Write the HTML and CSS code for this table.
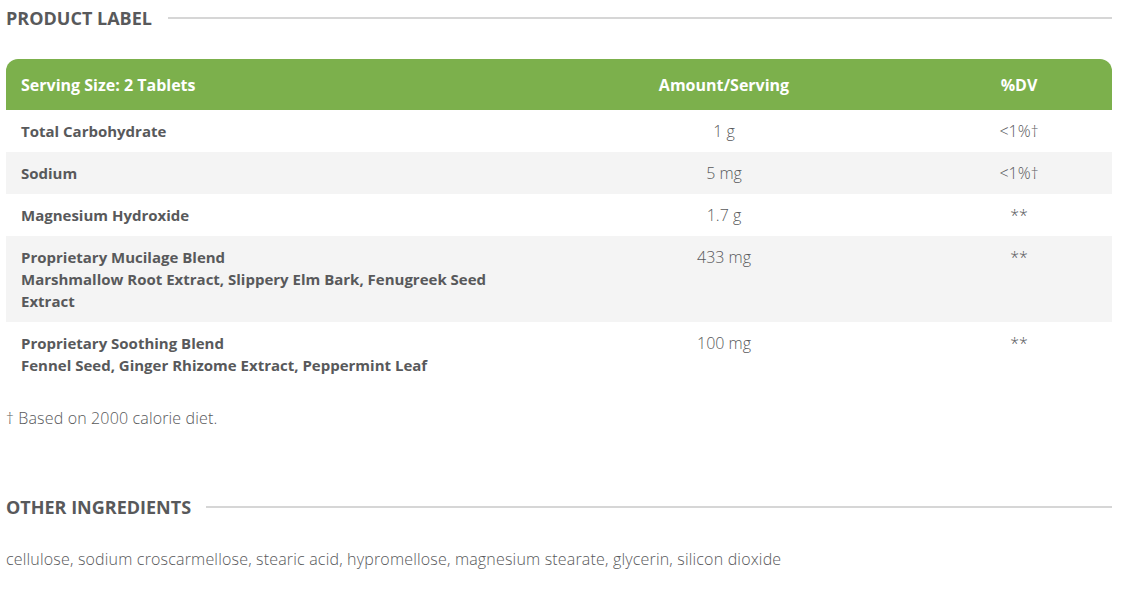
FILE: index.html
```html
<!DOCTYPE html>
<html>
<head>
<meta charset="utf-8">
<link rel="stylesheet" href="styles.css">
</head>
<body>
<section class="section">
  <h2 class="heading"><span class="heading-text">PRODUCT LABEL</span><span class="heading-line"></span></h2>
  <div class="facts">
    <div class="row head">
      <div class="cell name">Serving Size: 2 Tablets</div>
      <div class="cell amt">Amount/Serving</div>
      <div class="cell dv">%DV</div>
    </div>
    <div class="row">
      <div class="cell name">Total Carbohydrate</div>
      <div class="cell amt">1 g</div>
      <div class="cell dv">&lt;1%†</div>
    </div>
    <div class="row alt">
      <div class="cell name">Sodium</div>
      <div class="cell amt">5 mg</div>
      <div class="cell dv">&lt;1%†</div>
    </div>
    <div class="row">
      <div class="cell name">Magnesium Hydroxide</div>
      <div class="cell amt">1.7 g</div>
      <div class="cell dv">**</div>
    </div>
    <div class="row alt">
      <div class="cell name">Proprietary Mucilage Blend<br>Marshmallow Root Extract, Slippery Elm Bark, Fenugreek Seed Extract</div>
      <div class="cell amt">433 mg</div>
      <div class="cell dv">**</div>
    </div>
    <div class="row">
      <div class="cell name">Proprietary Soothing Blend<br>Fennel Seed, Ginger Rhizome Extract, Peppermint Leaf</div>
      <div class="cell amt">100 mg</div>
      <div class="cell dv">**</div>
    </div>
  </div>
  <p class="note">† Based on 2000 calorie diet.</p>
</section>
<section class="section other">
  <h2 class="heading narrow"><span class="heading-text">OTHER INGREDIENTS</span><span class="heading-line"></span></h2>
  <p class="ingredients">cellulose, sodium croscarmellose, stearic acid, hypromellose, magnesium stearate, glycerin, silicon dioxide</p>
</section>
</body>
</html>
```
FILE: styles.css
```css
html, body {
  margin: 0;
  padding: 0;
  background: #fff;
}
body {
  padding: 0 9px 0 6px;
  font-family: "Open Sans", Lato, sans-serif;
  color: #58595b;
}
.heading {
  display: flex;
  align-items: center;
  gap: 16px;
  margin: 0;
  height: 36px;
  font-size: 18px;
  font-weight: 700;
  color: #58595b;
}
.heading-line {
  flex: 1;
  height: 2px;
  background: #d6d6d6;
}
.narrow {
  gap: 15px;
}
.facts {
  margin-top: 23px;
}
.row {
  display: grid;
  grid-template-columns: 516px 404px 1fr;
  font-size: 15px;
  line-height: 22px;
}
.row.alt {
  background: #f4f4f4;
}
.row.head {
  background: #7cb04c;
  color: #fff;
  border-radius: 12px 12px 0 0;
  height: 51px;
  align-items: center;
  font-size: 16px;
}
.cell {
  padding: 10px 15px;
}
.name {
  font-weight: 700;
}
.head .cell {
  font-weight: 700;
}
.amt, .dv {
  text-align: center;
  font-weight: 300;
  font-size: 16px;
}
.note {
  margin: 21px 0 0;
  font-size: 16px;
  line-height: 22px;
  font-weight: 300;
  letter-spacing: 0.15px;
}
.other {
  margin-top: 60px;
}
.ingredients {
  margin: 23px 0 0;
  font-size: 16px;
  line-height: 22px;
  font-weight: 300;
  letter-spacing: 0.18px;
}
```
